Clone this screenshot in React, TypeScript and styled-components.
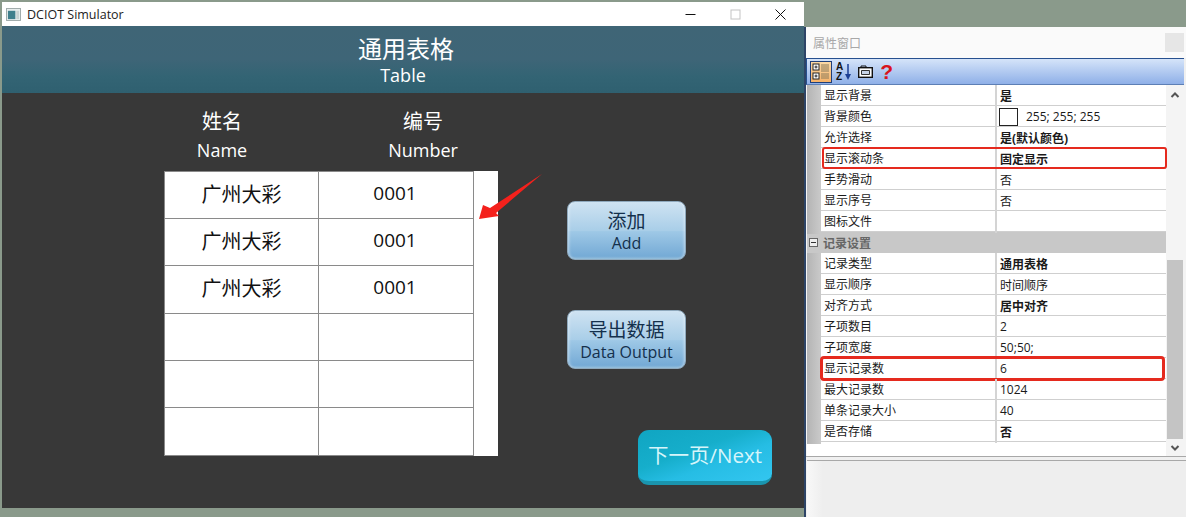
import styled, { createGlobalStyle } from 'styled-components'

const cjk = `"Open Sans", "Noto Sans CJK SC", sans-serif`

const GlobalStyle = createGlobalStyle`
  html, body {
    margin: 0;
    padding: 0;
    background: #8a9a8b;
  }
`

type PropRowData = {
  name: string
  value: string
  bold?: boolean
  swatch?: boolean
  marked?: 'thin' | 'thick'
}

const generalRows: PropRowData[] = [
  { name: '显示背景', value: '是', bold: true },
  { name: '背景颜色', value: '255; 255; 255', swatch: true },
  { name: '允许选择', value: '是(默认颜色)', bold: true },
  { name: '显示滚动条', value: '固定显示', bold: true, marked: 'thin' },
  { name: '手势滑动', value: '否' },
  { name: '显示序号', value: '否' },
  { name: '图标文件', value: '' },
]

const recordRows: PropRowData[] = [
  { name: '记录类型', value: '通用表格', bold: true },
  { name: '显示顺序', value: '时间顺序' },
  { name: '对齐方式', value: '居中对齐', bold: true },
  { name: '子项数目', value: '2' },
  { name: '子项宽度', value: '50;50;' },
  { name: '显示记录数', value: '6', marked: 'thick' },
  { name: '最大记录数', value: '1024' },
  { name: '单条记录大小', value: '40' },
  { name: '是否存储', value: '否', bold: true },
]

const tableRows = [
  ['广州大彩', '0001'],
  ['广州大彩', '0001'],
  ['广州大彩', '0001'],
  ['', ''],
  ['', ''],
  ['', ''],
]

function PropertyRow({ row }: { row: PropRowData }) {
  return (
    <Row $marked={row.marked}>
      <Gutter />
      <NameCell>{row.name}</NameCell>
      <ValueCell $bold={row.bold}>
        {row.swatch && <Swatch />}
        {row.value}
      </ValueCell>
    </Row>
  )
}

export default function App() {
  return (
    <Page>
      <GlobalStyle />
      <SimWindow>
        <TitleBar>
          <AppIcon viewBox="0 0 16 14">
            <rect x="0.5" y="0.5" width="15" height="13" fill="#e8eeee" stroke="#9aa6a6" />
            <rect x="2" y="3" width="8" height="9" fill="#3f7f8c" />
            <rect x="11" y="3" width="3" height="9" fill="#c8d2d2" />
          </AppIcon>
          <WindowTitle>DCIOT Simulator</WindowTitle>
          <WindowControls>
            <svg width="11" height="11" viewBox="0 0 11 11">
              <path d="M0.5 5.5H10.5" stroke="#111" />
            </svg>
            <svg width="11" height="11" viewBox="0 0 11 11">
              <rect x="1" y="1" width="9" height="9" fill="none" stroke="#c4c4c4" />
            </svg>
            <svg width="11" height="11" viewBox="0 0 11 11">
              <path d="M0.5 0.5L10.5 10.5M10.5 0.5L0.5 10.5" stroke="#111" />
            </svg>
          </WindowControls>
        </TitleBar>
        <ScreenHeader>
          <ScreenTitle>通用表格</ScreenTitle>
          <ScreenSubtitle>Table</ScreenSubtitle>
        </ScreenHeader>
        <Canvas>
          <TableColumn>
            <HeadRow>
              <HeadCell>
                <HeadCn>姓名</HeadCn>
                <HeadEn>Name</HeadEn>
              </HeadCell>
              <HeadCell>
                <HeadCn>编号</HeadCn>
                <HeadEn>Number</HeadEn>
              </HeadCell>
            </HeadRow>
            <TableWrap>
              <DataTable>
                {tableRows.map((r, i) => (
                  <TableRow key={i}>
                    <TableCell>{r[0]}</TableCell>
                    <TableCell>{r[1]}</TableCell>
                  </TableRow>
                ))}
              </DataTable>
              <BlankScroll />
            </TableWrap>
          </TableColumn>
          <ActionColumn>
            <GlossButton type="button">
              <GlossCn>添加</GlossCn>
              <GlossEn>Add</GlossEn>
            </GlossButton>
            <GlossButton type="button">
              <GlossCn>导出数据</GlossCn>
              <GlossEn>Data Output</GlossEn>
            </GlossButton>
            <NextButton type="button">下一页/Next</NextButton>
          </ActionColumn>
          <Arrow viewBox="0 0 70 52" width="70" height="52">
            <path d="M64 1L12 35L5 32L1 46L21 43L18 40L64 1Z" fill="#f4211c" />
          </Arrow>
        </Canvas>
      </SimWindow>

      <Panel>
        <PanelTitleRow>
          <PanelTitle>属性窗口</PanelTitle>
          <PanelClose />
        </PanelTitleRow>
        <Toolbar>
          <ToolButton $active>
            <svg width="18" height="18" viewBox="0 0 18 18">
              <rect x="1" y="1" width="6" height="6" fill="#fff" stroke="#222" />
              <path d="M2.5 4H5.5M4 2.5V5.5" stroke="#222" />
              <rect x="1" y="10" width="6" height="6" fill="#fff" stroke="#222" />
              <path d="M2.5 13H5.5M4 11.5V14.5" stroke="#222" />
              <path d="M9 2H17M9 4H17M9 6H17M9 8H17M9 11H17M9 13H17M9 15H17" stroke="#8a7a5a" />
            </svg>
          </ToolButton>
          <ToolButton>
            <SortLetters>
              <span>A</span>
              <span>Z</span>
            </SortLetters>
            <svg width="6" height="18" viewBox="0 0 6 18">
              <path d="M3 1V13" stroke="#1c3f94" strokeWidth="1.5" />
              <path d="M0 11H6L3 17Z" fill="#1c3f94" />
            </svg>
          </ToolButton>
          <ToolButton>
            <svg width="15" height="13" viewBox="0 0 15 13">
              <rect x="0.7" y="2.7" width="13.6" height="9.6" fill="#fff" stroke="#111" strokeWidth="1.4" />
              <path d="M3 3V1H8V3" fill="none" stroke="#111" />
              <path d="M3.5 5.5H11.5V9.5H3.5Z" fill="#c8d4e8" stroke="#333" />
            </svg>
          </ToolButton>
          <HelpMark>?</HelpMark>
        </Toolbar>
        <PanelBody>
          <PropGrid>
            {generalRows.map((row) => (
              <PropertyRow key={row.name} row={row} />
            ))}
            <SectionRow>
              <SectionToggle />
              记录设置
            </SectionRow>
            {recordRows.map((row) => (
              <PropertyRow key={row.name} row={row} />
            ))}
          </PropGrid>
          <ScrollBar>
            <ScrollEnd>
              <svg width="10" height="8" viewBox="0 0 10 8">
                <path d="M1.5 6L5 2.5L8.5 6" fill="none" stroke="#555" strokeWidth="2" />
              </svg>
            </ScrollEnd>
            <ScrollThumb />
            <ScrollEnd $bottom>
              <svg width="10" height="8" viewBox="0 0 10 8">
                <path d="M1.5 2L5 5.5L8.5 2" fill="none" stroke="#555" strokeWidth="2" />
              </svg>
            </ScrollEnd>
          </ScrollBar>
        </PanelBody>
        <PanelFooter />
      </Panel>
    </Page>
  )
}

const Page = styled.div`
  width: 1186px;
  height: 517px;
  display: flex;
  overflow: hidden;
  background: #8a9a8b;
`

const SimWindow = styled.div`
  width: 802px;
  height: 506px;
  margin: 2px 0 0 2px;
  display: flex;
  flex-direction: column;
  flex-shrink: 0;
`

const TitleBar = styled.div`
  height: 24px;
  display: flex;
  align-items: center;
  padding-left: 4px;
  background: #fff;
`

const AppIcon = styled.svg`
  width: 15px;
  height: 13px;
  margin-right: 6px;
`

const WindowTitle = styled.div`
  font: 12.5px "Open Sans", sans-serif;
  color: #222;
`

const WindowControls = styled.div`
  margin-left: auto;
  padding-right: 18px;
  display: flex;
  gap: 34px;
`

const ScreenHeader = styled.div`
  height: 67px;
  display: flex;
  flex-direction: column;
  align-items: center;
  background: linear-gradient(#3f6576 0%, #3e6577 50%, #336474 75%, #2f6070 100%);
  color: #fff;
`

const ScreenTitle = styled.div`
  font: 24px/32px ${cjk};
  margin: 7px 0 0 6px;
`

const ScreenSubtitle = styled.div`
  font: 18px/22px ${cjk};
  margin-top: -1px;
`

const Canvas = styled.div`
  flex: 1;
  position: relative;
  display: flex;
  padding-left: 160px;
  background: #383838;
`

const TableColumn = styled.div`
  width: 336px;
`

const HeadRow = styled.div`
  height: 78px;
  display: flex;
  gap: 81px;
  padding-top: 15px;
  box-sizing: border-box;
`

const HeadCell = styled.div`
  width: 120px;
  display: flex;
  flex-direction: column;
  align-items: center;
  color: #fff;
`

const HeadCn = styled.div`
  font: 20px/28px ${cjk};
`

const HeadEn = styled.div`
  font: 18px/28px ${cjk};
`

const TableWrap = styled.div`
  display: flex;
  margin-left: 2px;
  height: 285px;
`

const DataTable = styled.div`
  width: 310px;
  box-sizing: border-box;
  display: grid;
  grid-template-rows: repeat(6, 1fr);
  border: 1px solid #8a8a8a;
  background: #fff;
`

const TableRow = styled.div`
  display: grid;
  grid-template-columns: 154px 1fr;
  border-bottom: 1px solid #8a8a8a;

  &:last-child {
    border-bottom: 0;
  }
`

const TableCell = styled.div`
  display: flex;
  align-items: center;
  justify-content: center;
  padding-bottom: 4px;
  font: 19px ${cjk};
  color: #111;

  &:first-child {
    font-size: 20px;
    border-right: 1px solid #8a8a8a;
  }

  &:last-child {
    padding-right: 2px;
  }
`

const BlankScroll = styled.div`
  width: 24px;
  background: #fff;
`

const ActionColumn = styled.div`
  margin-left: 69px;
  padding-top: 108px;
  display: flex;
  flex-direction: column;
  align-items: flex-start;
`

const GlossButton = styled.button`
  width: 119px;
  height: 59px;
  margin-bottom: 50px;
  padding: 2px 0 0;
  display: flex;
  flex-direction: column;
  align-items: center;
  justify-content: center;
  border: 1px solid #8fa9bd;
  border-radius: 8px;
  background: linear-gradient(#cfe3f2 0%, #a9cee8 50%, #9ec8e6 52%, #76abd6 95%, #93bddb 100%);
  box-shadow: inset 3px 0 3px -2px rgba(255, 255, 255, 0.45), inset -3px 0 3px -2px rgba(255, 255, 255, 0.45);
  color: #14304c;
`

const GlossCn = styled.span`
  font: 19px/23px ${cjk};
`

const GlossEn = styled.span`
  font: 16px/20px ${cjk};
`

const NextButton = styled.button`
  width: 134px;
  height: 55px;
  margin: 11px 0 0 71px;
  padding: 0 0 3px;
  border: 0;
  border-bottom: 4px solid #1a95ae;
  border-radius: 11px;
  background: linear-gradient(160deg, #10a5c2 0%, #16aecb 40%, #26bde4 62%, #33c6f0 100%);
  font: 20.5px ${cjk};
  color: #d6f5fa;
  white-space: nowrap;
`

const Arrow = styled.svg`
  position: absolute;
  left: 476px;
  top: 80px;
`

const Panel = styled.div`
  flex: 1;
  margin-top: 27px;
  display: flex;
  flex-direction: column;
  box-sizing: border-box;
  border-left: 2px solid #2d4466;
  background: #f0f0f0;
  font: 12px ${cjk};
  color: #1a1a1a;
`

const PanelTitleRow = styled.div`
  height: 31px;
  display: flex;
  align-items: center;
  justify-content: space-between;
  padding: 0 2px 0 7px;
  background: #fafafa;
`

const PanelTitle = styled.div`
  color: #a8a8a8;
`

const PanelClose = styled.div`
  width: 19px;
  height: 19px;
  background: #e6e6e6;
`

const Toolbar = styled.div`
  height: 27px;
  box-sizing: border-box;
  display: flex;
  align-items: center;
  gap: 7px;
  margin-right: 2px;
  padding-left: 3px;
  border-top: 1px solid #27508f;
  border-bottom: 1px solid #5d7fb5;
  border-left: 1px solid #27508f;
  background: linear-gradient(#d5e4f9, #8fb0e8);
`

const ToolButton = styled.div<{ $active?: boolean }>`
  height: 22px;
  box-sizing: border-box;
  display: flex;
  align-items: center;
  justify-content: center;
  ${({ $active }) =>
    $active &&
    `
    width: 22px;
    margin-right: -3px;
    border: 1px solid #1f3f7a;
    background: linear-gradient(#fbd9a6, #f5b26a);
  `}
`

const SortLetters = styled.div`
  display: flex;
  flex-direction: column;
  margin-right: 2px;
  font: bold 10px/10px "Liberation Sans", sans-serif;
  color: #111;
`

const HelpMark = styled.div`
  width: 12px;
  text-align: center;
  font: bold 21px/22px "Liberation Sans", sans-serif;
  color: #d8141c;
`

const PanelBody = styled.div`
  height: 371px;
  display: flex;
  padding-left: 1px;
  border-bottom: 1px solid #a8a8a8;
  background: #f4f4f4;
`

const PropGrid = styled.div`
  width: 359px;
  background: #fff;
`

const Row = styled.div<{ $marked?: 'thin' | 'thick' }>`
  position: relative;
  height: 21px;
  box-sizing: border-box;
  display: grid;
  grid-template-columns: 14px 176px 1fr;
  border-bottom: 1px solid #cfcfcf;

  ${({ $marked }) =>
    $marked === 'thin' &&
    `
    &::after {
      content: '';
      position: absolute;
      left: 15px;
      right: -1px;
      top: -1px;
      bottom: -1px;
      border: 2px solid #e52a1e;
      border-radius: 3px;
    }
  `}

  ${({ $marked }) =>
    $marked === 'thick' &&
    `
    &::after {
      content: '';
      position: absolute;
      left: 13px;
      right: 1px;
      top: -2px;
      bottom: -3px;
      border: 3px solid #e52a1e;
      border-radius: 4px;
    }
  `}
`

const Gutter = styled.div`
  margin-bottom: -1px;
  background: linear-gradient(90deg, #b4b4b4, #cacaca);
`

const NameCell = styled.div`
  padding-left: 3px;
  line-height: 22px;
  border-right: 2px solid #d4d4d4;
`

const ValueCell = styled.div<{ $bold?: boolean }>`
  display: flex;
  align-items: center;
  padding: 0 0 1px 3px;
  font-weight: ${({ $bold }) => ($bold ? 700 : 400)};
`

const Swatch = styled.span`
  width: 19px;
  height: 18px;
  margin: 1px 8px 0 -1px;
  box-sizing: border-box;
  border: 1px solid #222;
  background: #fff;
`

const SectionRow = styled.div`
  height: 21px;
  margin-top: -1px;
  padding-top: 1px;
  display: flex;
  align-items: center;
  background: #c8c8c8;
  font-weight: 700;
  color: #666;
`

const SectionToggle = styled.span`
  position: relative;
  width: 7px;
  height: 7px;
  margin: 0 5px 0 2px;
  border: 1px solid #666;
  background: #eee;

  &::after {
    content: '';
    position: absolute;
    left: 1px;
    right: 1px;
    top: 3px;
    height: 1px;
    background: #333;
  }
`

const ScrollBar = styled.div`
  width: 16px;
  margin-left: 1px;
  display: flex;
  flex-direction: column;
`

const ScrollEnd = styled.div<{ $bottom?: boolean }>`
  height: ${({ $bottom }) => ($bottom ? '17px' : '175px')};
  display: flex;
  justify-content: center;
  align-items: ${({ $bottom }) => ($bottom ? 'center' : 'flex-start')};
  padding-top: ${({ $bottom }) => ($bottom ? '0' : '6px')};
  box-sizing: border-box;
`

const ScrollThumb = styled.div`
  flex: 1;
  background: #c4c4c4;
`

const PanelFooter = styled.div`
  flex: 1;
  margin-top: 3px;
  margin-left: 1px;
  border-top: 1px solid #a8a8a8;
  background: linear-gradient(90deg, #f8f8f8, #eeeeee 16px);
`
